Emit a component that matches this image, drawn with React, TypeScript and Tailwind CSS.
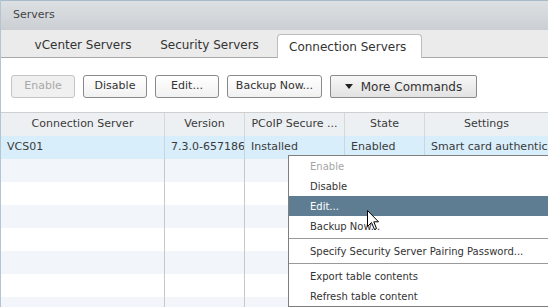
import React from 'react';

const columns = [
  { label: 'Connection Server', width: 'w-[164px]' },
  { label: 'Version', width: 'w-[80px]' },
  { label: 'PCoIP Secure ...', width: 'w-[100px]' },
  { label: 'State', width: 'w-[80px]' },
  { label: 'Settings', width: 'flex-1' },
];

const firstRow = ['VCS01', '7.3.0-6571866', 'Installed', 'Enabled', 'Smart card authentication'];

const menuItems: { label: string; disabled?: boolean; active?: boolean; sep?: boolean }[] = [
  { label: 'Enable', disabled: true },
  { label: 'Disable' },
  { label: 'Edit...', active: true },
  { label: 'Backup Now...' },
  { label: '', sep: true },
  { label: 'Specify Security Server Pairing Password...' },
  { label: '', sep: true },
  { label: 'Export table contents' },
  { label: 'Refresh table content' },
];

const Btn = ({ label, w, disabled }: { label: string; w: string; disabled?: boolean }) => (
  <button
    className={`${w} h-[23px] rounded-[3px] border text-[11px] flex items-center justify-center ${
      disabled
        ? 'border-[#c4c4c4] bg-[#f0f0f0] text-[#a8a8a8]'
        : 'border-[#8a8a8a] bg-gradient-to-b from-white to-[#f1f1f1] text-[#333]'
    }`}
  >
    {label}
  </button>
);

const App = () => {
  return (
    <div className="relative w-[548px] h-[307px] overflow-hidden bg-white border-l border-[#b4c4d0] font-['DejaVu_Sans',sans-serif] text-[#3a3a3a]">
      {/* title bar */}
      <div className="h-[30px] border-t border-[#a9bac8] bg-gradient-to-b from-[#dde0e3] to-[#cbcfd3] flex items-center pl-[12px] text-[11px] text-[#444]">
        Servers
      </div>

      {/* tabs */}
      <div className="h-[28px] bg-[#ebebeb] border-b border-[#a9a9a9] flex items-end pl-[19px] text-[12px] text-[#333]">
        <div className="w-[126px] h-[24px] flex items-center justify-center">vCenter Servers</div>
        <div className="w-[127px] h-[24px] flex items-center justify-center">Security Servers</div>
        <div className="ml-[4px] w-[145px] h-[24px] pl-[11px] bg-white border border-b-0 border-[#bdbdbd] rounded-t-[4px] flex items-center -mb-px">
          Connection Servers
        </div>
      </div>

      {/* toolbar */}
      <div className="pt-[17px] pl-[10px] flex gap-[8px]">
        <Btn label="Enable" w="w-[64px]" disabled />
        <Btn label="Disable" w="w-[64px]" />
        <Btn label="Edit..." w="w-[64px]" />
        <Btn label="Backup Now..." w="w-[95px]" />
        <button className="w-[147px] h-[23px] rounded-[2px] border border-[#8a8a8a] bg-gradient-to-b from-[#f7f7f7] to-[#e2e2e2] text-[12px] text-[#333] flex items-center justify-center gap-[8px]">
          <svg width="8" height="5" viewBox="0 0 8 5">
            <path d="M0 0 L8 0 L4 5 Z" fill="#222" />
          </svg>
          More Commands
        </button>
      </div>

      {/* table */}
      <div className="mt-[14px] border-t border-[#cfcfcf] text-[11px]">
        <div className="flex h-[23px] bg-[#edf0f2]">
          {columns.map((c, i) => (
            <div
              key={c.label}
              className={`${c.width} flex items-center justify-center whitespace-nowrap overflow-hidden ${
                i < 4 ? 'border-r border-[#d6d8da]' : ''
              }`}
            >
              {c.label}
            </div>
          ))}
        </div>
        <div className="flex h-[23px] bg-[#d9eefb]">
          {columns.map((c, i) => (
            <div
              key={c.label}
              className={`${c.width} flex items-center pl-[6px] whitespace-nowrap overflow-hidden ${
                i < 4 ? 'border-r border-[#c9d6df]' : ''
              }`}
            >
              {firstRow[i]}
            </div>
          ))}
        </div>
        {Array.from({ length: 7 }).map((_, r) => (
          <div key={r} className={`flex h-[23px] ${r % 2 === 0 ? 'bg-[#f2f6fb]' : 'bg-white'}`}>
            {columns.map((c, i) => (
              <div key={c.label} className={`${c.width} ${i < 4 ? 'border-r border-[#c8c8c8]' : ''}`} />
            ))}
          </div>
        ))}
      </div>

      {/* context menu */}
      <div className="absolute left-[287px] top-[155px] w-[272px] bg-white border border-[#7e7e7e] text-[10px] text-[#333]">
        {menuItems.map((m, i) =>
          m.sep ? (
            <div key={i} className="py-[2px]">
              <div className="h-px bg-[#9a9a9a]" />
            </div>
          ) : (
            <div
              key={i}
              className={`h-[20px] flex items-center pl-[21px] whitespace-nowrap ${
                m.active ? 'bg-[#5e7d93] text-white' : m.disabled ? 'text-[#a5a5a5]' : ''
              }`}
            >
              {m.label}
            </div>
          )
        )}
      </div>

      {/* mouse cursor */}
      <svg className="absolute left-[366px] top-[210px]" width="13" height="21" viewBox="0 0 13 21">
        <path d="M0.5 0.5 L0.5 16.5 L4.5 12.5 L7.5 19.5 L9.5 18.5 L6.8 11.8 L11.5 11.8 Z" fill="white" stroke="black" strokeWidth="1" />
      </svg>
    </div>
  );
};

export default App;
